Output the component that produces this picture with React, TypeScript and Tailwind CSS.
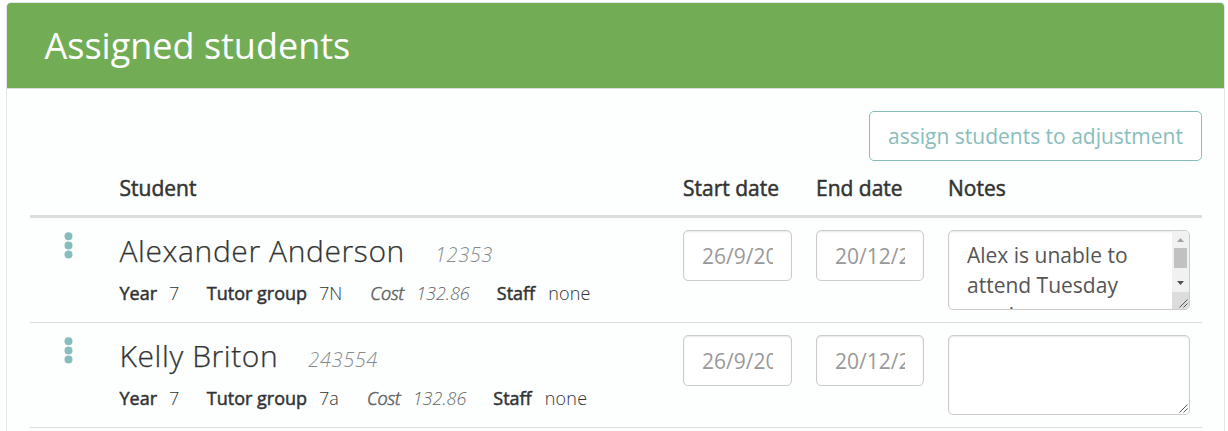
type Student = {
  name: string;
  id: string;
  year: string;
  tutorGroup: string;
  cost: string;
  staff: string;
  start: string;
  end: string;
  notes: string;
};

const students: Student[] = [
  {
    name: "Alexander Anderson",
    id: "12353",
    year: "7",
    tutorGroup: "7N",
    cost: "132.86",
    staff: "none",
    start: "26/9/2016",
    end: "20/12/2016",
    notes: "Alex is unable to attend Tuesday sessions.",
  },
  {
    name: "Kelly Briton",
    id: "243554",
    year: "7",
    tutorGroup: "7a",
    cost: "132.86",
    staff: "none",
    start: "26/9/2016",
    end: "20/12/2016",
    notes: "",
  },
];

const columns = "grid grid-cols-[89.5px_563.5px_133px_132px_254px]";

function Dots() {
  return (
    <svg className="ml-[34px] mt-[14px] h-[27px] w-[9px]" viewBox="0 0 9 27" fill="#88bdbc">
      <circle cx="4.5" cy="4.2" r="4" />
      <circle cx="4.5" cy="13.4" r="4" />
      <circle cx="4.5" cy="22.6" r="4" />
    </svg>
  );
}

function DateInput({ value, className }: { value: string; className: string }) {
  return (
    <input
      className={`${className} mt-3 h-[51px] rounded-[5px] border border-[#ccc] bg-white px-[18px] text-[21px] text-[#999] shadow-[inset_0_1px_2px_rgba(0,0,0,0.1)] outline-none`}
      defaultValue={value}
    />
  );
}

function Grip() {
  return (
    <svg
      className="absolute bottom-px right-px h-[9px] w-[9px]"
      viewBox="0 0 9 9"
      stroke="#555"
      strokeWidth="1"
    >
      <path d="M0.5 8.5L8.5 0.5M4.5 8.5L8.5 4.5" />
    </svg>
  );
}

function Notes({ text }: { text: string }) {
  return (
    <div className="relative mt-3 flex h-20 w-[242px] overflow-hidden rounded-[5px] border border-[#ccc] bg-white shadow-[inset_0_1px_2px_rgba(0,0,0,0.1)]">
      <p className="w-[223px] pl-[18px] pr-4 pt-[9px] text-[21px] leading-[30px] text-[#555]">
        {text}
      </p>
      {text && (
        <div className="flex w-[17px] shrink-0 flex-col items-center bg-[#f1f1f1]">
          <svg className="h-[17px] w-[17px] shrink-0" viewBox="0 0 17 17" fill="#a3a3a3">
            <path d="M5 11L8.5 7L12 11Z" />
          </svg>
          <div className="h-5 w-[13px] shrink-0 bg-[#c1c1c1]" />
          <svg className="mt-[7px] h-[17px] w-[17px] shrink-0" viewBox="0 0 17 17" fill="#505050">
            <path d="M5 6L8.5 10L12 6Z" />
          </svg>
          <div className="h-[17px] w-full bg-[#dcdcdc]" />
        </div>
      )}
      <Grip />
    </div>
  );
}

function StudentRow({ student }: { student: Student }) {
  return (
    <div className={`${columns} h-[105px] border-b border-[#ddd]`}>
      <Dots />
      <div className="whitespace-nowrap pt-3">
        <div className="flex h-[42px] items-baseline leading-[42px]">
          <span className="text-[30px] font-light tracking-[0.6px] [-webkit-text-stroke:0.25px]">
            {student.name}
          </span>
          <span className="ml-[30px] text-[20px] font-light italic tracking-[0.6px] text-[#888]">
            {student.id}
          </span>
        </div>
        <div className="mt-[7px] flex text-[18px] font-light leading-7">
          <span className="font-normal [-webkit-text-stroke:0.5px]">Year</span>
          <span className="ml-3">{student.year}</span>
          <span className="ml-[27.5px] font-normal [-webkit-text-stroke:0.5px]">Tutor group</span>
          <span className="ml-3">{student.tutorGroup}</span>
          <span className="ml-7 italic tracking-[-0.1px] text-[#666] [-webkit-text-stroke:0.6px]">
            Cost
          </span>
          <span className="ml-3 italic text-[#666]">{student.cost}</span>
          <span className="ml-[27px] font-normal [-webkit-text-stroke:0.5px]">Staff</span>
          <span className="ml-[13px] tracking-[0.2px]">{student.staff}</span>
        </div>
      </div>
      <DateInput value={student.start} className="w-[109px]" />
      <DateInput value={student.end} className="w-[108px]" />
      <Notes text={student.notes} />
    </div>
  );
}

export default function App() {
  return (
    <div className="h-[431px] overflow-hidden bg-white pl-1.5 pr-[3px] pt-0.5 font-['Open_Sans',sans-serif] text-[#333]">
      <div className="h-[500px] rounded-t-[5px] border border-[#e3e6ea] bg-[#fcfffe]">
        <div className="h-[86px] rounded-t-[4px] border-b border-[#dcdcdc] bg-[#72ad56] pl-[37.5px]">
          <h1 className="text-[36px] leading-[86px] text-white">Assigned students</h1>
        </div>
        <div className="pl-[23px] pr-[22px] pt-[22px]">
          <div className="flex justify-end">
            <button className="h-[50px] w-[333px] whitespace-nowrap rounded-[5px] border border-[#88bdbc] bg-white pt-px text-[21px] text-[#88bdbc]">
              assign students to adjustment
            </button>
          </div>
          <div
            className={`${columns} h-[57px] border-b-[3px] border-[#ddd] pt-3 text-[21px] leading-[30px] [-webkit-text-stroke:0.5px]`}
          >
            <span />
            <span>Student</span>
            <span>Start date</span>
            <span>End date</span>
            <span>Notes</span>
          </div>
          {students.map((student) => (
            <StudentRow key={student.id} student={student} />
          ))}
        </div>
      </div>
    </div>
  );
}
